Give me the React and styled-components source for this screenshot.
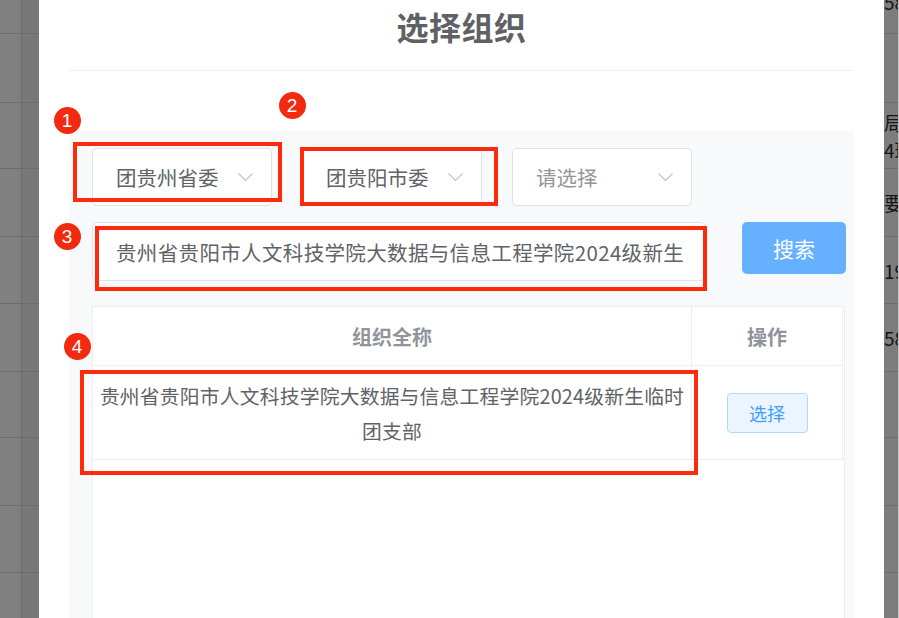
import React from 'react';
import styled, { createGlobalStyle } from 'styled-components';

const GlobalStyle = createGlobalStyle`
  html, body {
    margin: 0;
    padding: 0;
    overflow: hidden;
    font-family: "Noto Sans CJK SC", "Noto Sans", sans-serif;
  }
`;

const Page = styled.div`
  position: relative;
  width: 899px;
  height: 618px;
  overflow: hidden;
  display: flex;
  background: #7f7f7f;
`;

const LeftStrip = styled.div`
  width: 39px;
  flex-shrink: 0;
  display: grid;
  grid-template-columns: 21px 18px;
`;

const StripCol = styled.div`
  display: flex;
  flex-direction: column;
  background: ${(p) => p.bg};
  border-left: ${(p) => (p.divided ? '1px solid #6c6c6c' : 'none')};
`;

const BgRow = styled.div`
  height: ${(p) => p.h}px;
  flex-shrink: 0;
  box-sizing: border-box;
  border-bottom: 1px solid #6d6d6d;
  display: flex;
  flex-direction: column;
  justify-content: center;
  overflow: hidden;
`;

const RightStrip = styled.div`
  width: 14px;
  flex-shrink: 0;
  display: flex;
  flex-direction: column;
  background: #7d7d7d;
  border-right: 1px solid #c4c4c4;
  overflow: hidden;
`;

const BgText = styled.span`
  display: block;
  font-size: 19px;
  line-height: 27px;
  color: #151515;
  white-space: nowrap;
  margin-top: ${(p) => p.shift || 0}px;
`;

const Modal = styled.div`
  width: 845px;
  flex-shrink: 0;
  height: 618px;
  box-sizing: border-box;
  background: #fff;
  padding: 0 30px;
  display: flex;
  flex-direction: column;
`;

const Header = styled.div`
  height: 71px;
  box-sizing: border-box;
  border-bottom: 1px solid #eeeff2;
  text-align: center;
`;

const Title = styled.h2`
  margin: 0;
  font-size: 32px;
  line-height: 52px;
  font-weight: 700;
  letter-spacing: 0.5px;
  color: #5f6165;
`;

const Panel = styled.div`
  margin-top: 60px;
  flex: 1;
  background: #f8f9fb;
  padding: 17px 0 0 23px;
  display: flex;
  flex-direction: column;
  min-height: 0;
`;

const SelectRow = styled.div`
  display: flex;
  gap: 30px;
`;

const Select = styled.div`
  width: 180px;
  height: 58px;
  box-sizing: border-box;
  border: 1px solid #dfe2e8;
  border-radius: 5px;
  background: #fff;
  display: flex;
  align-items: center;
  justify-content: space-between;
  padding: 0 18px 0 23px;
  font-size: 20.5px;
  color: ${(p) => (p.placeholder ? '#939599' : '#606266')};
`;

const SearchRow = styled.div`
  margin-top: 16px;
  display: flex;
  align-items: flex-start;
`;

const Input = styled.div`
  width: 614px;
  height: 59px;
  box-sizing: border-box;
  border: 1px solid #dfe2e8;
  border-radius: 5px;
  background: #fff;
  display: flex;
  align-items: center;
  padding-left: 23px;
  font-size: 20.5px;
  letter-spacing: 0.35px;
  color: #606266;
  white-space: nowrap;
  overflow: hidden;
`;

const SearchButton = styled.button`
  margin-left: 36px;
  width: 104px;
  height: 52px;
  border: none;
  border-radius: 5px;
  background: #66b1ff;
  color: #fff;
  font-family: inherit;
  font-size: 21px;
  padding: 0;
`;

const Table = styled.div`
  margin-top: 25px;
  width: 753px;
  flex: 1;
  box-sizing: border-box;
  background: #fff;
  border: 1px solid #ebeef5;
  border-bottom: none;
`;

const Row = styled.div`
  display: grid;
  grid-template-columns: 599px 151px;
  height: ${(p) => p.h}px;
  border-bottom: 1px solid #ebeef5;
  box-sizing: border-box;
`;

const Cell = styled.div`
  display: flex;
  align-items: center;
  justify-content: center;
  text-align: center;
  border-right: 1px solid #ebeef5;
  font-size: ${(p) => (p.head ? 20 : 19.8)}px;
  font-weight: ${(p) => (p.head ? 700 : 400)};
  letter-spacing: ${(p) => (p.head ? 0 : 0.2)}px;
  color: ${(p) => (p.head ? '#909399' : '#606266')};
  line-height: 35px;
`;

const SmallButton = styled.button`
  width: 81px;
  height: 40px;
  box-sizing: border-box;
  border: 1px solid #b3d8ff;
  border-radius: 4px;
  background: #ecf5ff;
  color: #409eff;
  font-family: inherit;
  font-size: 18px;
  padding: 0;
`;

const Mark = styled.div`
  position: absolute;
  left: ${(p) => p.x}px;
  top: ${(p) => p.y}px;
  width: ${(p) => p.w}px;
  height: ${(p) => p.h}px;
  box-sizing: border-box;
  border: 4px solid #fd2a0c;
  pointer-events: none;
`;

const Badge = styled.div`
  position: absolute;
  left: ${(p) => p.x - 13.5}px;
  top: ${(p) => p.y - 13.5}px;
  width: 27px;
  height: 27px;
  border-radius: 50%;
  background: #f22a10;
  color: #fff;
  font-family: "Liberation Sans", Arial, sans-serif;
  font-size: 19px;
  line-height: 27px;
  text-align: center;
`;

const Chevron = () => (
  <svg width="15" height="8" viewBox="0 0 15 8">
    <polyline points="0.5,0.5 7.5,7.5 14.5,0.5" fill="none" stroke="#c0c4cc" strokeWidth="1.2" />
  </svg>
);

const rowHeights = [34, 69, 66, 68, 67, 68, 66, 68, 67, 67];

const rightTexts = [
  [{ t: '58', shift: -30 }],
  [],
  [{ t: '局' }, { t: '4班' }],
  [{ t: '要' }],
  [{ t: '19' }],
  [{ t: '58' }],
  [],
  [],
  [],
  [],
];

const App = () => {
  return (
    <>
      <GlobalStyle />
      <Page>
        <LeftStrip>
          <StripCol bg="#808080">
            {rowHeights.map((h, i) => (
              <BgRow key={i} h={h} />
            ))}
          </StripCol>
          <StripCol bg="#787878" divided>
            {rowHeights.map((h, i) => (
              <BgRow key={i} h={h} />
            ))}
          </StripCol>
        </LeftStrip>

        <Modal>
          <Header>
            <Title>选择组织</Title>
          </Header>
          <Panel>
            <SelectRow>
              <Select>
                <span>团贵州省委</span>
                <Chevron />
              </Select>
              <Select>
                <span>团贵阳市委</span>
                <Chevron />
              </Select>
              <Select placeholder>
                <span>请选择</span>
                <Chevron />
              </Select>
            </SelectRow>
            <SearchRow>
              <Input>贵州省贵阳市人文科技学院大数据与信息工程学院2024级新生</Input>
              <SearchButton>搜索</SearchButton>
            </SearchRow>
            <Table>
              <Row h={59}>
                <Cell head>组织全称</Cell>
                <Cell head>操作</Cell>
              </Row>
              <Row h={94}>
                <Cell>
                  <span>
                    贵州省贵阳市人文科技学院大数据与信息工程学院2024级新生临时
                    <br />
                    团支部
                  </span>
                </Cell>
                <Cell>
                  <SmallButton>选择</SmallButton>
                </Cell>
              </Row>
            </Table>
          </Panel>
        </Modal>

        <RightStrip>
          {rowHeights.map((h, i) => (
            <BgRow key={i} h={h}>
              {rightTexts[i].map((r, j) => (
                <BgText key={j} shift={r.shift}>
                  {r.t}
                </BgText>
              ))}
            </BgRow>
          ))}
        </RightStrip>

        <Mark x={73} y={142} w={209} h={60} />
        <Mark x={300} y={147} w={198} h={59} />
        <Mark x={95} y={226} w={612} h={65} />
        <Mark x={80} y={370} w={618} h={105} />

        <Badge x={67} y={120}>1</Badge>
        <Badge x={292} y={105}>2</Badge>
        <Badge x={67} y={236}>3</Badge>
        <Badge x={77} y={346}>4</Badge>
      </Page>
    </>
  );
};

export default App;
